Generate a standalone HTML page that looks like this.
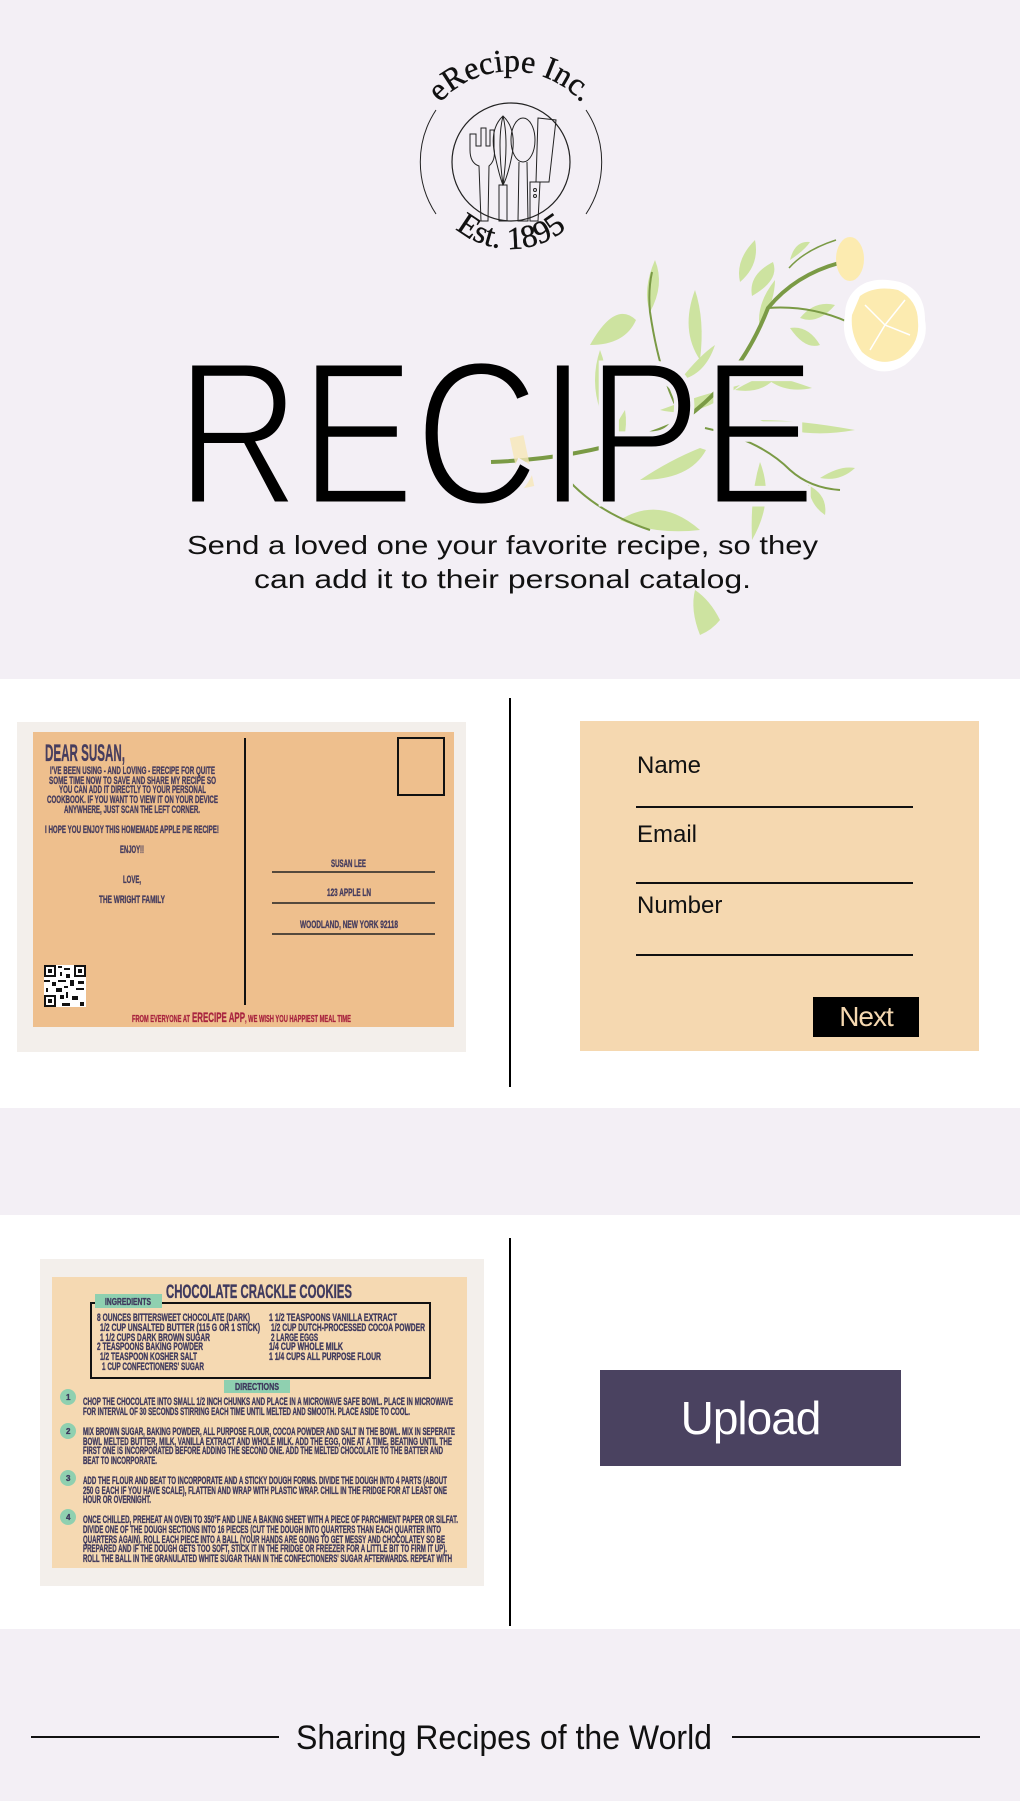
<!DOCTYPE html>
<html><head><meta charset="utf-8">
<style>
*{margin:0;padding:0;box-sizing:border-box}
html,body{width:1020px;height:1801px;overflow:hidden;background:#fff;font-family:"Liberation Sans",sans-serif}
.abs{position:absolute}
</style></head><body>
<div class="abs" style="left:0;top:0;width:1020px;height:679px;background:#f3eff5"></div>
<div class="abs" style="left:0;top:1108px;width:1020px;height:107px;background:#f3eff5"></div>
<div class="abs" style="left:0;top:1629px;width:1020px;height:172px;background:#f3eff5"></div>

<svg class="abs" style="left:0;top:0" width="1020" height="679" viewBox="0 0 1020 679">
  <defs>
    <path id="topArc" d="M424,128 A95,95 0 0 1 598,128"/>
    <path id="botArc" d="M436,205 A86,86 0 0 0 586,205"/>
  </defs>
  <text font-family="Liberation Serif,serif" font-size="32" fill="#111" stroke="#111" stroke-width="0.4"><textPath href="#topArc" startOffset="50%" text-anchor="middle">eRecipe Inc.</textPath></text>
  <text font-family="Liberation Serif,serif" font-size="32" fill="#111" stroke="#111" stroke-width="0.4"><textPath href="#botArc" startOffset="50%" text-anchor="middle">Est. 1895</textPath></text>
  <path d="M436,110 A94,94 0 0 0 436,214" fill="none" stroke="#222" stroke-width="1"/>
  <path d="M586,110 A94,94 0 0 1 586,214" fill="none" stroke="#222" stroke-width="1"/>
  <ellipse cx="511" cy="162" rx="59" ry="59" fill="none" stroke="#222" stroke-width="1.2"/>
  <g fill="none" stroke="#222" stroke-width="1">
    <path d="M470,134 L470,150 Q470,163 479,166 L481,221 L488,221 L489,166 Q496,160 494,148 L494,130 L490,130 L490,146 L486,146 L486,128 L481,128 L481,146 L476,146 L476,134 Z"/>
    <path d="M503,116 Q488,130 496,160 Q500,178 503,185 Q507,178 511,160 Q518,130 503,116 Z M503,116 Q497,140 503,185 M503,116 Q509,140 503,185"/>
    <path d="M499,185 L499,221 L507,221 L507,185 Z"/>
    <ellipse cx="523" cy="140" rx="12" ry="22"/>
    <path d="M519,162 L518,221 L528,221 L527,162"/>
    <path d="M538,118 L556,120 L549,182 L536,182 Z"/>
    <path d="M530,182 L540,182 L538,221 L530,221 Z"/>
    <circle cx="535" cy="190" r="1.5"/><circle cx="535" cy="196" r="1.5"/>
  </g>

  <g fill="#cde3a0">
    <path d="M650,312 Q665,285 655,260 Q642,290 650,312Z"/>
    <path d="M636,320 Q615,300 590,345 Q625,345 636,320Z"/>
    <path d="M700,360 Q705,320 695,290 Q680,330 700,360Z"/>
    <path d="M740,282 Q760,265 755,240 Q735,260 740,282Z"/>
    <path d="M752,296 Q780,280 773,262 Q748,275 752,296Z"/>
    <path d="M790,260 Q805,250 810,242 Q795,240 790,260Z"/>
    <path d="M800,318 Q815,300 835,305 Q818,325 800,318Z"/>
    <path d="M790,328 Q805,350 820,345 Q808,325 790,328Z"/>
    <path d="M760,372 Q790,380 812,388 Q780,395 760,372Z"/>
    <path d="M760,420 Q800,420 855,430 Q800,440 760,420Z"/>
    <path d="M820,478 Q840,465 855,468 Q840,482 820,478Z"/>
    <path d="M808,485 Q828,495 825,515 Q810,505 808,485Z"/>
    <path d="M760,462 Q750,495 752,540 Q775,500 760,462Z"/>
    <path d="M700,448 Q670,460 640,480 Q690,480 706,450Z"/>
    <path d="M610,465 Q630,440 625,410 Q605,440 610,465Z"/>
    <path d="M620,520 Q660,495 700,530 Q655,535 620,520Z"/>
    <path d="M680,380 Q700,355 715,345 Q705,375 680,380Z"/>
    <path d="M700,635 Q690,610 695,590 Q710,600 720,620 Q712,630 700,635Z"/>
    <path d="M660,410 Q700,395 740,385 Q700,420 660,410Z"/>
    <path d="M735,390 Q760,375 780,372 Q765,395 735,390Z"/>
    <path d="M760,330 Q775,300 775,280 Q755,305 760,330Z"/>
    <path d="M600,350 Q590,380 600,410 Q612,380 600,350Z"/>
  </g>
  <path d="M491,462 Q600,458 683,420 Q740,380 768,308 Q795,275 839,263" fill="none" stroke="#7a9a45" stroke-width="4"/>
  <path d="M683,420 Q660,380 650,312 Q648,290 652,272" fill="none" stroke="#7a9a45" stroke-width="2"/>
  <path d="M768,308 Q810,305 848,322" fill="none" stroke="#7a9a45" stroke-width="2"/>
  <path d="M705,428 Q760,440 790,470 Q810,488 840,490" fill="none" stroke="#7a9a45" stroke-width="2"/>
  <path d="M560,470 Q590,510 650,530" fill="none" stroke="#7a9a45" stroke-width="2"/>
  <path d="M789,268 Q805,250 836,240" fill="none" stroke="#7a9a45" stroke-width="1.5"/>
  <rect x="515" y="436" width="14" height="52" fill="#f6e7b8" opacity="0.8" transform="rotate(-12 522 462)"/>
  <g>
    <path d="M855,290 Q870,275 900,282 Q925,290 925,320 Q930,345 905,365 Q880,380 858,360 Q840,340 845,315 Q845,300 855,290Z" fill="#fff"/>
    <path d="M860,296 Q875,285 898,290 Q918,300 918,322 Q920,345 900,358 Q880,368 862,352 Q850,335 852,315Z" fill="#fcebb0"/>
    <path d="M885,325 L865,305 M885,325 L905,300 M885,325 L910,335 M885,325 L870,350" stroke="#fff" stroke-width="1.5"/>
    <ellipse cx="850" cy="259" rx="14" ry="22" fill="#fcebb0"/>
  </g>

  <text x="176" y="504" font-family="Liberation Sans,sans-serif" font-size="205" textLength="640" lengthAdjust="spacingAndGlyphs" fill="#000" stroke="#f3eff5" stroke-width="5">RECIPE</text>
  <text x="187" y="554" font-family="Liberation Sans,sans-serif" font-size="26" textLength="631" lengthAdjust="spacingAndGlyphs" fill="#111">Send a loved one your favorite recipe, so they</text>
  <text x="254" y="588" font-family="Liberation Sans,sans-serif" font-size="26" textLength="497" lengthAdjust="spacingAndGlyphs" fill="#111">can add it to their personal catalog.</text>
</svg>

<div class="abs" style="left:509px;top:698px;width:2px;height:389px;background:#000"></div>
<div class="abs" style="left:509px;top:1238px;width:2px;height:388px;background:#000"></div>

<svg class="abs" style="left:0;top:700px" width="510" height="380" viewBox="0 700 510 380">
  <rect x="17" y="722" width="449" height="330" fill="#f3efeb"/>
  <rect x="33" y="732" width="421" height="295" fill="#eebf8d"/>
  <line x1="245" y1="738" x2="245" y2="1005" stroke="#111" stroke-width="2"/>
  <rect x="398" y="738" width="46" height="57" fill="none" stroke="#111" stroke-width="2"/>
  <g font-family="Liberation Sans Narrow,Liberation Sans,sans-serif" font-weight="bold" fill="#463d5e" stroke="#463d5e" stroke-width="0.35">
    <text x="45" y="761" font-size="24" textLength="80" lengthAdjust="spacingAndGlyphs">DEAR SUSAN,</text>
    <text x="50" y="774" font-size="11" textLength="165" lengthAdjust="spacingAndGlyphs">I'VE BEEN USING - AND LOVING - ERECIPE FOR QUITE</text>
    <text x="49" y="784" font-size="11" textLength="167" lengthAdjust="spacingAndGlyphs">SOME TIME NOW TO SAVE AND SHARE MY RECIPE SO</text>
    <text x="59" y="793" font-size="11" textLength="147" lengthAdjust="spacingAndGlyphs">YOU CAN ADD IT DIRECTLY TO YOUR PERSONAL</text>
    <text x="47" y="803" font-size="11" textLength="171" lengthAdjust="spacingAndGlyphs">COOKBOOK. IF YOU WANT TO VIEW IT ON YOUR DEVICE</text>
    <text x="64" y="813" font-size="11" textLength="136" lengthAdjust="spacingAndGlyphs">ANYWHERE, JUST SCAN THE LEFT CORNER.</text>
    <text x="45" y="833" font-size="11" textLength="174" lengthAdjust="spacingAndGlyphs">I HOPE YOU ENJOY THIS HOMEMADE APPLE PIE RECIPE!</text>
    <text x="120" y="853" font-size="11" textLength="24" lengthAdjust="spacingAndGlyphs">ENJOY!!</text>
    <text x="123" y="883" font-size="11" textLength="18" lengthAdjust="spacingAndGlyphs">LOVE,</text>
    <text x="99" y="903" font-size="11" textLength="66" lengthAdjust="spacingAndGlyphs">THE WRIGHT FAMILY</text>
    <text x="331" y="867" font-size="11" textLength="35" lengthAdjust="spacingAndGlyphs">SUSAN LEE</text>
    <text x="327" y="896" font-size="11" textLength="44" lengthAdjust="spacingAndGlyphs">123 APPLE LN</text>
    <text x="300" y="928" font-size="11" textLength="98" lengthAdjust="spacingAndGlyphs">WOODLAND, NEW YORK 92118</text>
  </g>
  <g stroke="#222" stroke-width="1.5">
    <line x1="272" y1="872" x2="435" y2="872"/>
    <line x1="272" y1="903" x2="435" y2="903"/>
    <line x1="272" y1="934" x2="435" y2="934"/>
  </g>
  <g font-family="Liberation Sans Narrow,Liberation Sans,sans-serif" font-weight="bold" fill="#a8243f" stroke="#a8243f" stroke-width="0.3">
    <text x="132" y="1022" font-size="10" textLength="58" lengthAdjust="spacingAndGlyphs">FROM EVERYONE AT</text>
    <text x="192" y="1022" font-size="14" textLength="53" lengthAdjust="spacingAndGlyphs">ERECIPE APP</text>
    <text x="245" y="1022" font-size="10" textLength="106" lengthAdjust="spacingAndGlyphs">, WE WISH YOU HAPPIEST MEAL TIME</text>
  </g>
  <rect x="44" y="965" width="42" height="42" fill="#fff"/>
  <g fill="#111">
    <rect x="44" y="965" width="12" height="12"/><rect x="74" y="965" width="12" height="12"/><rect x="44" y="995" width="12" height="12"/>
  </g>
  <g fill="#fff"><rect x="46" y="967" width="8" height="8"/><rect x="76" y="967" width="8" height="8"/><rect x="46" y="997" width="8" height="8"/></g>
  <g fill="#111"><rect x="48" y="969" width="4" height="4"/><rect x="78" y="969" width="4" height="4"/><rect x="48" y="999" width="4" height="4"/>
    <rect x="58" y="966" width="4" height="2"/><rect x="64" y="968" width="6" height="2"/><rect x="60" y="972" width="2" height="4"/><rect x="66" y="974" width="4" height="4"/>
    <rect x="44" y="980" width="6" height="2"/><rect x="52" y="982" width="4" height="4"/><rect x="58" y="980" width="8" height="2"/><rect x="70" y="980" width="4" height="6"/><rect x="78" y="981" width="6" height="3"/>
    <rect x="46" y="988" width="2" height="4"/><rect x="56" y="988" width="6" height="4"/><rect x="64" y="986" width="4" height="2"/><rect x="76" y="988" width="8" height="2"/>
    <rect x="60" y="995" width="4" height="4"/><rect x="66" y="992" width="2" height="6"/><rect x="72" y="996" width="6" height="4"/><rect x="80" y="1002" width="4" height="4"/><rect x="62" y="1003" width="8" height="3"/>
  </g>
</svg>

<div class="abs" style="left:580px;top:721px;width:399px;height:330px;background:#f5d8b0"></div>
<div class="abs" style="left:637px;top:752px;font-size:24px;color:#111">Name</div>
<div class="abs" style="left:636px;top:806px;width:277px;height:2px;background:#111"></div>
<div class="abs" style="left:637px;top:821px;font-size:24px;color:#111">Email</div>
<div class="abs" style="left:636px;top:882px;width:277px;height:2px;background:#111"></div>
<div class="abs" style="left:637px;top:892px;font-size:24px;color:#111">Number</div>
<div class="abs" style="left:636px;top:954px;width:277px;height:2px;background:#111"></div>
<div class="abs" style="left:813px;top:997px;width:106px;height:40px;background:#000;color:#f5d8b0;font-size:28px;text-align:center;line-height:40px;letter-spacing:-1px">Next</div>

<svg class="abs" style="left:0;top:1250px" width="510" height="360" viewBox="0 1250 510 360">
  <rect x="40" y="1259" width="444" height="327" fill="#f3efeb"/>
  <rect x="52" y="1277" width="415" height="291" fill="#f5d9b2"/>
  <rect x="91" y="1303" width="339" height="75" fill="none" stroke="#111" stroke-width="2"/>
  <rect x="95" y="1294" width="67" height="14" fill="#8fd0b0"/>
  <rect x="224" y="1380" width="66" height="13" fill="#8fd0b0"/>
  <g fill="#8fd0b0"><circle cx="68" cy="1397" r="8"/><circle cx="68" cy="1431" r="8"/><circle cx="68" cy="1478" r="8"/><circle cx="68" cy="1517" r="8"/></g>
  <g font-family="Liberation Sans Narrow,Liberation Sans,sans-serif" font-weight="bold" fill="#3f3a5e" stroke="#3f3a5e" stroke-width="0.35">
    <text x="166" y="1298" font-size="19" textLength="186" lengthAdjust="spacingAndGlyphs">CHOCOLATE CRACKLE COOKIES</text>
    <text x="105" y="1305" font-size="10" textLength="46" lengthAdjust="spacingAndGlyphs">INGREDIENTS</text>
    <text x="235" y="1390" font-size="10" textLength="44" lengthAdjust="spacingAndGlyphs">DIRECTIONS</text>
    <g font-size="8"><text x="66" y="1400">1</text><text x="66" y="1434">2</text><text x="66" y="1481">3</text><text x="66" y="1520">4</text></g>
    <g font-size="11">
      <text x="97" y="1321" textLength="153" lengthAdjust="spacingAndGlyphs">8 OUNCES BITTERSWEET CHOCOLATE (DARK)</text>
      <text x="100" y="1331" textLength="160" lengthAdjust="spacingAndGlyphs">1/2 CUP UNSALTED BUTTER (115 G OR 1 STICK)</text>
      <text x="100" y="1341" textLength="110" lengthAdjust="spacingAndGlyphs">1 1/2 CUPS DARK BROWN SUGAR</text>
      <text x="97" y="1350" textLength="106" lengthAdjust="spacingAndGlyphs">2 TEASPOONS BAKING POWDER</text>
      <text x="100" y="1360" textLength="97" lengthAdjust="spacingAndGlyphs">1/2 TEASPOON KOSHER SALT</text>
      <text x="102" y="1370" textLength="102" lengthAdjust="spacingAndGlyphs">1 CUP CONFECTIONERS' SUGAR</text>
      <text x="269" y="1321" textLength="128" lengthAdjust="spacingAndGlyphs">1 1/2 TEASPOONS VANILLA EXTRACT</text>
      <text x="271" y="1331" textLength="154" lengthAdjust="spacingAndGlyphs">1/2 CUP DUTCH-PROCESSED COCOA POWDER</text>
      <text x="271" y="1341" textLength="47" lengthAdjust="spacingAndGlyphs">2 LARGE EGGS</text>
      <text x="269" y="1350" textLength="74" lengthAdjust="spacingAndGlyphs">1/4 CUP WHOLE MILK</text>
      <text x="269" y="1360" textLength="112" lengthAdjust="spacingAndGlyphs">1 1/4 CUPS ALL PURPOSE FLOUR</text>
    </g>
    <g font-size="11">
      <text x="83" y="1405" textLength="370" lengthAdjust="spacingAndGlyphs">CHOP THE CHOCOLATE INTO SMALL 1/2 INCH CHUNKS AND PLACE IN A MICROWAVE SAFE BOWL. PLACE IN MICROWAVE</text>
      <text x="83" y="1415" textLength="327" lengthAdjust="spacingAndGlyphs">FOR INTERVAL OF 30 SECONDS STIRRING EACH TIME UNTIL MELTED AND SMOOTH. PLACE ASIDE TO COOL.</text>
      <text x="83" y="1435" textLength="372" lengthAdjust="spacingAndGlyphs">MIX BROWN SUGAR, BAKING POWDER, ALL PURPOSE FLOUR, COCOA POWDER AND SALT IN THE BOWL. MIX IN SEPERATE</text>
      <text x="83" y="1445" textLength="369" lengthAdjust="spacingAndGlyphs">BOWL MELTED BUTTER, MILK, VANILLA EXTRACT AND WHOLE MILK. ADD THE EGG, ONE AT A TIME, BEATING UNTIL THE</text>
      <text x="83" y="1454" textLength="360" lengthAdjust="spacingAndGlyphs">FIRST ONE IS INCORPORATED BEFORE ADDING THE SECOND ONE. ADD THE MELTED CHOCOLATE TO THE BATTER AND</text>
      <text x="83" y="1464" textLength="74" lengthAdjust="spacingAndGlyphs">BEAT TO INCORPORATE.</text>
      <text x="83" y="1484" textLength="364" lengthAdjust="spacingAndGlyphs">ADD THE FLOUR AND BEAT TO INCORPORATE AND A STICKY DOUGH FORMS. DIVIDE THE DOUGH INTO 4 PARTS (ABOUT</text>
      <text x="83" y="1494" textLength="364" lengthAdjust="spacingAndGlyphs">250 G EACH IF YOU HAVE SCALE), FLATTEN AND WRAP WITH PLASTIC WRAP. CHILL IN THE FRIDGE FOR AT LEAST ONE</text>
      <text x="83" y="1503" textLength="68" lengthAdjust="spacingAndGlyphs">HOUR OR OVERNIGHT.</text>
      <text x="83" y="1523" textLength="375" lengthAdjust="spacingAndGlyphs">ONCE CHILLED, PREHEAT AN OVEN TO 350°F AND LINE A BAKING SHEET WITH A PIECE OF PARCHMENT PAPER OR SILFAT.</text>
      <text x="83" y="1533" textLength="358" lengthAdjust="spacingAndGlyphs">DIVIDE ONE OF THE DOUGH SECTIONS INTO 16 PIECES (CUT THE DOUGH INTO QUARTERS THAN EACH QUARTER INTO</text>
      <text x="83" y="1543" textLength="362" lengthAdjust="spacingAndGlyphs">QUARTERS AGAIN). ROLL EACH PIECE INTO A BALL (YOUR HANDS ARE GOING TO GET MESSY AND CHOCOLATEY SO BE</text>
      <text x="83" y="1552" textLength="364" lengthAdjust="spacingAndGlyphs">PREPARED AND IF THE DOUGH GETS TOO SOFT, STICK IT IN THE FRIDGE OR FREEZER FOR A LITTLE BIT TO FIRM IT UP).</text>
      <text x="83" y="1562" textLength="369" lengthAdjust="spacingAndGlyphs">ROLL THE BALL IN THE GRANULATED WHITE SUGAR THAN IN THE CONFECTIONERS' SUGAR AFTERWARDS. REPEAT WITH</text>
    </g>
  </g>
</svg>

<div class="abs" style="left:600px;top:1370px;width:301px;height:96px;background:#4a4260;color:#fff;font-size:46px;text-align:center;line-height:96px;letter-spacing:-1px">Upload</div>

<div class="abs" style="left:31px;top:1736px;width:248px;height:2px;background:#111"></div>
<div class="abs" style="left:732px;top:1736px;width:248px;height:2px;background:#111"></div>
<svg class="abs" style="left:0;top:1700px" width="1020" height="80">
  <text x="296" y="49" font-family="Liberation Sans,sans-serif" font-size="34" textLength="416" lengthAdjust="spacingAndGlyphs" fill="#111">Sharing Recipes of the World</text>
</svg>
</body></html>
